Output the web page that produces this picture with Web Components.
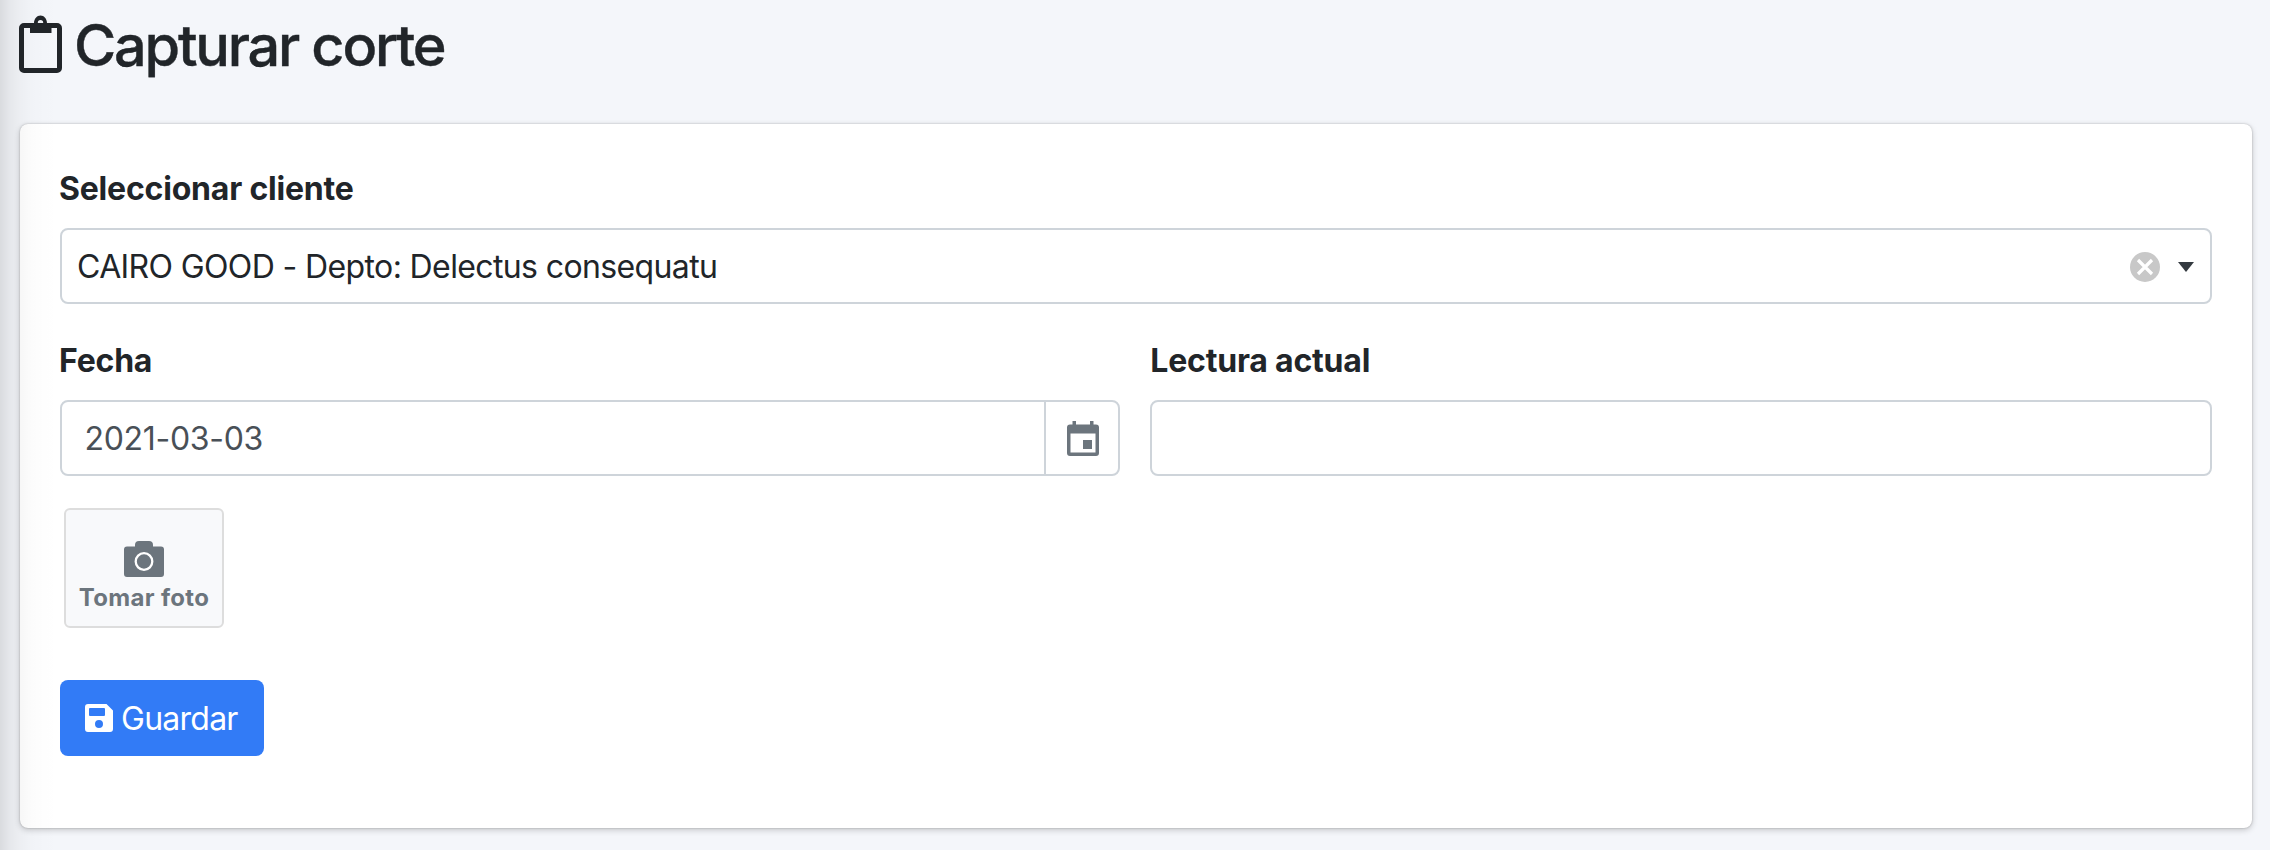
<!DOCTYPE html>
<html lang="es">
<head>
<meta charset="utf-8">
<title>Capturar corte</title>
<style>
html,body{margin:0;height:100%}
body{background:#f4f6fa;font-family:Inter,"Liberation Sans",sans-serif;font-size:32px;line-height:48px;color:#212529;overflow:hidden}
</style>
</head>
<body>
<capture-page></capture-page>
<script>
const define=(name,html)=>customElements.define(name,class extends HTMLElement{
  constructor(){super();this.attachShadow({mode:'open'}).innerHTML=html;}
});

define('page-title',`<style>
:host{display:flex;align-items:flex-start;height:124px;padding-left:19px;box-sizing:border-box}
svg{width:44px;height:60px;margin-top:14px;flex:none}
h1{margin:10px 0 0 11px;font-size:57.6px;font-weight:500;line-height:70px;letter-spacing:-2.2px;white-space:nowrap;-webkit-text-stroke:.4px #212529}
</style>
<svg viewBox="0 0 44 60"><rect x="2.5" y="11.5" width="38" height="45" rx="2.5" fill="none" stroke="#212529" stroke-width="5"/><path fill="#212529" fill-rule="evenodd" d="M11 9h4C15 5 18 1.500 21.500 1.500S28 5 28 9h4.500v10H11zM21.500 6a2.700 2.700 0 1 0 0 5.400a2.700 2.700 0 0 0 0-5.400z"/></svg>
<h1><slot></slot></h1>`);

define('form-card',`<style>
:host{display:block;box-sizing:border-box;height:704px;margin:0 18px 0 20px;padding:40px;background:#fff;border-radius:8px;box-shadow:0 0 2px rgba(0,0,0,.25),0 2px 6px rgba(0,0,0,.2)}
</style><slot></slot>`);

define('form-field',`<style>
:host{display:block;min-width:0}
label{display:block;box-sizing:border-box;height:64px;padding-top:1px;font-weight:700;letter-spacing:-.2px;text-indent:var(--label-indent,-1px);white-space:nowrap}
</style><label><slot name="label"></slot></label><slot></slot>`);

define('text-box',`<style>
:host{display:flex;align-items:center;box-sizing:border-box;height:76px;border:2px solid #ced4da;border-radius:8px;background:#fff;overflow:hidden}
.value{flex:1;white-space:nowrap;padding-top:2px}
</style><div class="value"><slot></slot></div><slot name="end"></slot>`);

define('select-controls',`<style>
:host{display:flex;align-items:center;gap:18px;padding:2px 16px 0 0}
svg{display:block}
</style>
<svg width="30" height="30" viewBox="0 0 30 30"><circle cx="15" cy="15" r="15" fill="#c8c8c8"/><path d="M8 8L22 22M22 8L8 22" stroke="#fff" stroke-width="3.200"/></svg>
<svg width="16" height="10" viewBox="0 0 16 10"><path d="M0 0h16L8 10z" fill="#343a40"/></svg>`);

define('calendar-button',`<style>
:host{display:flex;align-items:center;justify-content:center;box-sizing:border-box;width:74px;height:72px;padding:2px 0 0 2px;border-left:2px solid #ced4da}
</style>
<svg width="32" height="36" viewBox="0 0 32 36"><path fill="#6c757d" fill-rule="evenodd" d="M5.500 0H9v3.500h14V0h3.500v3.500H29a3 3 0 0 1 3 3V32a3 3 0 0 1-3 3H3a3 3 0 0 1-3-3V6.500a3 3 0 0 1 3-3h2.500zM3.500 12.500v19h25v-19z"/><rect x="16" y="19" width="9" height="9" fill="#6c757d"/></svg>`);

define('photo-button',`<style>
:host{display:flex;flex-direction:column;align-items:center;box-sizing:border-box;width:160px;height:120px;padding-top:31px;border:2px solid #ddd;border-radius:6px;background:#f8f9fb;color:#6c757d;font-size:24px;font-weight:700;line-height:36px;letter-spacing:.35px;white-space:nowrap}
svg{display:block;flex:none;margin-bottom:3px}
</style>
<svg width="40" height="36" viewBox="0 0 40 36"><path fill="#6c757d" d="M3 5.500h8V4q0-4 4-4h10q4 0 4 4v1.500h8a3 3 0 0 1 3 3V33a3 3 0 0 1-3 3H3a3 3 0 0 1-3-3V8.500a3 3 0 0 1 3-3z"/><circle cx="20" cy="20.500" r="8.300" fill="none" stroke="#fff" stroke-width="2.300"/></svg>
<span><slot></slot></span>`);

define('save-button',`<style>
:host{display:flex;align-items:center;box-sizing:border-box;width:204px;height:76px;padding-left:25px;border-radius:8px;background:#327bf6;color:#fff;letter-spacing:-.75px;white-space:nowrap}
svg{flex:none;margin-right:8px}
span{padding-top:2px}
</style>
<svg width="28" height="28" viewBox="0 0 28 28"><path fill="#fff" fill-rule="evenodd" d="M3 0h18.500L28 6.500V25a3 3 0 0 1-3 3H3a3 3 0 0 1-3-3V3a3 3 0 0 1 3-3zM5 4a1 1 0 0 0-1 1v6a1 1 0 0 0 1 1h14a1 1 0 0 0 1-1V5a1 1 0 0 0-1-1zM14 16a4 4 0 1 0 0 8a4 4 0 0 0 0-8z"/></svg>
<span><slot></slot></span>`);

define('capture-page',`<style>
:host{display:block;height:850px;position:relative}
.row{display:grid;grid-template-columns:1060px 1062px;gap:30px;margin-top:32px}
.client{padding-left:15px;letter-spacing:-.62px}
.reading{--label-indent:.3px}
.date{padding-left:22.5px;color:#495057;letter-spacing:-.3px}
photo-button{margin:32px 0 52px 4px}
.shade{position:absolute;inset:0 auto 0 0;width:60px;pointer-events:none;background:linear-gradient(90deg,rgba(0,0,0,.11),rgba(0,0,0,.06) 10px,rgba(0,0,0,.03) 20px,rgba(0,0,0,.012) 32px,rgba(0,0,0,.005) 46px,transparent)}
</style>
<page-title>Capturar corte</page-title>
<form-card>
<form-field><span slot="label">Seleccionar cliente</span><text-box><span class="client">CAIRO GOOD - Depto: Delectus consequatu</span><select-controls slot="end"></select-controls></text-box></form-field>
<div class="row">
<form-field><span slot="label">Fecha</span><text-box><span class="date">2021-03-03</span><calendar-button slot="end"></calendar-button></text-box></form-field>
<form-field class="reading"><span slot="label">Lectura actual</span><text-box></text-box></form-field>
</div>
<photo-button>Tomar foto</photo-button>
<save-button>Guardar</save-button>
</form-card>
<div class="shade"></div>`);
</script>
</body>
</html>
